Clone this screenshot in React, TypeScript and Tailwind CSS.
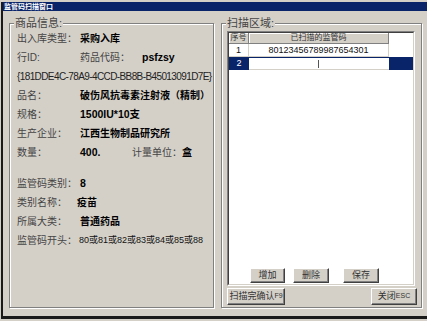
const font = "font-['Liberation_Sans','Noto_Sans_CJK_SC',sans-serif]";

const Row = ({ label, children }: { label: string; children?: React.ReactNode }) => (
  <div className="flex h-[19px] items-center">
    <div className="w-[63px] shrink-0 text-[10px] text-[#444]">{label}</div>
    {children}
  </div>
);

const Btn = ({ children, className = "" }: { children: React.ReactNode; className?: string }) => (
  <div
    className={`flex items-center justify-center border border-t-white border-l-white border-r-[#404040] border-b-[#404040] bg-[#d4d0c8] text-[9px] text-[#333] shadow-[inset_-1px_-1px_0_#808080] ${className}`}
  >
    {children}
  </div>
);

export default function App() {
  return (
    <div className={`h-[321px] w-[427px] overflow-hidden bg-[#d4d0c8] ${font}`}>
      <div className="ml-[1px] mt-[2px] flex h-[317px] flex-col border-b-[3px] border-l-2 border-[#1a1a1a]">
        {/* title bar */}
        <div className="flex h-[9px] items-center bg-[#0a246a] pl-[1px] text-[7px] font-bold leading-none text-white">
          监管码扫描窗口
        </div>

        <div className="flex gap-[7px] pl-[6px] pt-[12px]">
          {/* goods info */}
          <div className="relative h-[285px] w-[205px] border border-[#808080] shadow-[1px_1px_0_#fff,inset_1px_1px_0_#fff]">
            <div className="absolute -top-[7px] left-[4px] bg-[#d4d0c8] px-[1px] text-[11px] leading-[13px] text-[#444]">
              商品信息:
            </div>
            <div className="flex flex-col pl-[7px] pt-[5px]">
              <Row label="出入库类型：">
                <span className="text-[10px] font-bold text-black">采购入库</span>
              </Row>
              <Row label="行ID:">
                <span className="w-[62px] text-[10px] text-[#444]">药品代码：</span>
                <span className="text-[10.5px] font-bold text-black">psfzsy</span>
              </Row>
              <div className="flex h-[19px] items-center text-[10px] tracking-[-0.6px] text-[#222]">
                {"{181DDE4C-78A9-4CCD-BB8B-B45013091D7E}"}
              </div>
              <Row label="品名：">
                <span className="text-[10px] font-bold text-black">破伤风抗毒素注射液（精制）</span>
              </Row>
              <Row label="规格：">
                <span className="text-[10.5px] font-bold text-black">1500IU*10支</span>
              </Row>
              <Row label="生产企业：">
                <span className="text-[10px] font-bold text-black">江西生物制品研究所</span>
              </Row>
              <Row label="数量：">
                <span className="w-[52px] text-[10.5px] font-bold text-black">400.</span>
                <span className="w-[50px] text-[10px] text-[#444]">计量单位：</span>
                <span className="text-[10px] font-bold text-black">盒</span>
              </Row>

              <div className="mt-[12px] flex flex-col">
                <Row label="监管码类别：">
                  <span className="text-[10.5px] font-bold text-black">8</span>
                </Row>
                <Row label="类别名称：">
                  <span className="-ml-[3px] text-[10px] font-bold text-black">疫苗</span>
                </Row>
                <Row label="所属大类：">
                  <span className="text-[10px] font-bold text-black">普通药品</span>
                </Row>
                <Row label="监管码开头：">
                  <span className="-ml-[1px] text-[9px] text-[#111]">80或81或82或83或84或85或88</span>
                </Row>
              </div>
            </div>
          </div>

          {/* scan area */}
          <div className="relative flex h-[285px] w-[201px] flex-col border border-[#808080] pl-[5px] pr-[4px] pt-[7px] shadow-[1px_1px_0_#fff,inset_1px_1px_0_#fff]">
            <div className="absolute -top-[7px] left-[4px] bg-[#d4d0c8] px-[1px] text-[11px] leading-[13px] text-[#444]">
              扫描区域:
            </div>

            <div className="mr-[2px] h-[255px] border border-t-[#808080] border-l-[#808080] border-r-white border-b-white">
              <div className="flex h-full flex-col border border-t-[#404040] border-l-[#404040] border-r-[#d4d0c8] border-b-[#d4d0c8] bg-white">
                {/* header */}
                <div className="grid h-[11px] grid-cols-[20px_140px_1fr] text-[8px] leading-none text-[#333]">
                  <div className="flex items-center justify-center border-b border-r border-[#808080] bg-[#d4d0c8] shadow-[inset_1px_1px_0_#fff]">
                    序号
                  </div>
                  <div className="flex items-center justify-center border-b border-r border-[#808080] bg-[#d4d0c8] shadow-[inset_1px_1px_0_#fff]">
                    已扫描的监管码
                  </div>
                  <div />
                </div>
                {/* row 1 */}
                <div className="grid h-[13px] grid-cols-[20px_140px_1fr] text-[9px] leading-none text-[#111]">
                  <div className="flex items-center justify-center border-b border-r border-[#d4d0c8]">1</div>
                  <div className="flex items-center justify-center border-b border-r border-[#d4d0c8]">
                    80123456789987654301
                  </div>
                  <div />
                </div>
                {/* row 2, selected */}
                <div className="grid h-[13px] grid-cols-[20px_140px_1fr] text-[9px] leading-none">
                  <div className="flex items-center justify-center bg-[#0a246a] text-white">2</div>
                  <div className="flex items-center border-t border-[#0a246a] border-b-[#d4d0c8] border-b bg-white">
                    <div className="w-[69px]" />
                    <div className="h-[8px] w-px bg-[#555]" />
                  </div>
                  <div className="bg-[#0a246a]" />
                </div>

                <div className="flex-1" />
                <div className="flex pb-[1px]">
                  <Btn className="ml-[21px] h-[15px] w-[35px]">增加</Btn>
                  <Btn className="ml-[8px] h-[15px] w-[36px]">删除</Btn>
                  <Btn className="ml-[14px] h-[15px] w-[36px]">保存</Btn>
                </div>
              </div>
            </div>

            <div className="mt-[2px] flex h-[17px] justify-between">
              <Btn className="h-[17px] w-[58px]">
                扫描完确认<span className="text-[7px]">F9</span>
              </Btn>
              <Btn className="h-[17px] w-[46px]">
                关闭<span className="text-[7px]">ESC</span>
              </Btn>
            </div>
          </div>
        </div>
      </div>
    </div>
  );
}
